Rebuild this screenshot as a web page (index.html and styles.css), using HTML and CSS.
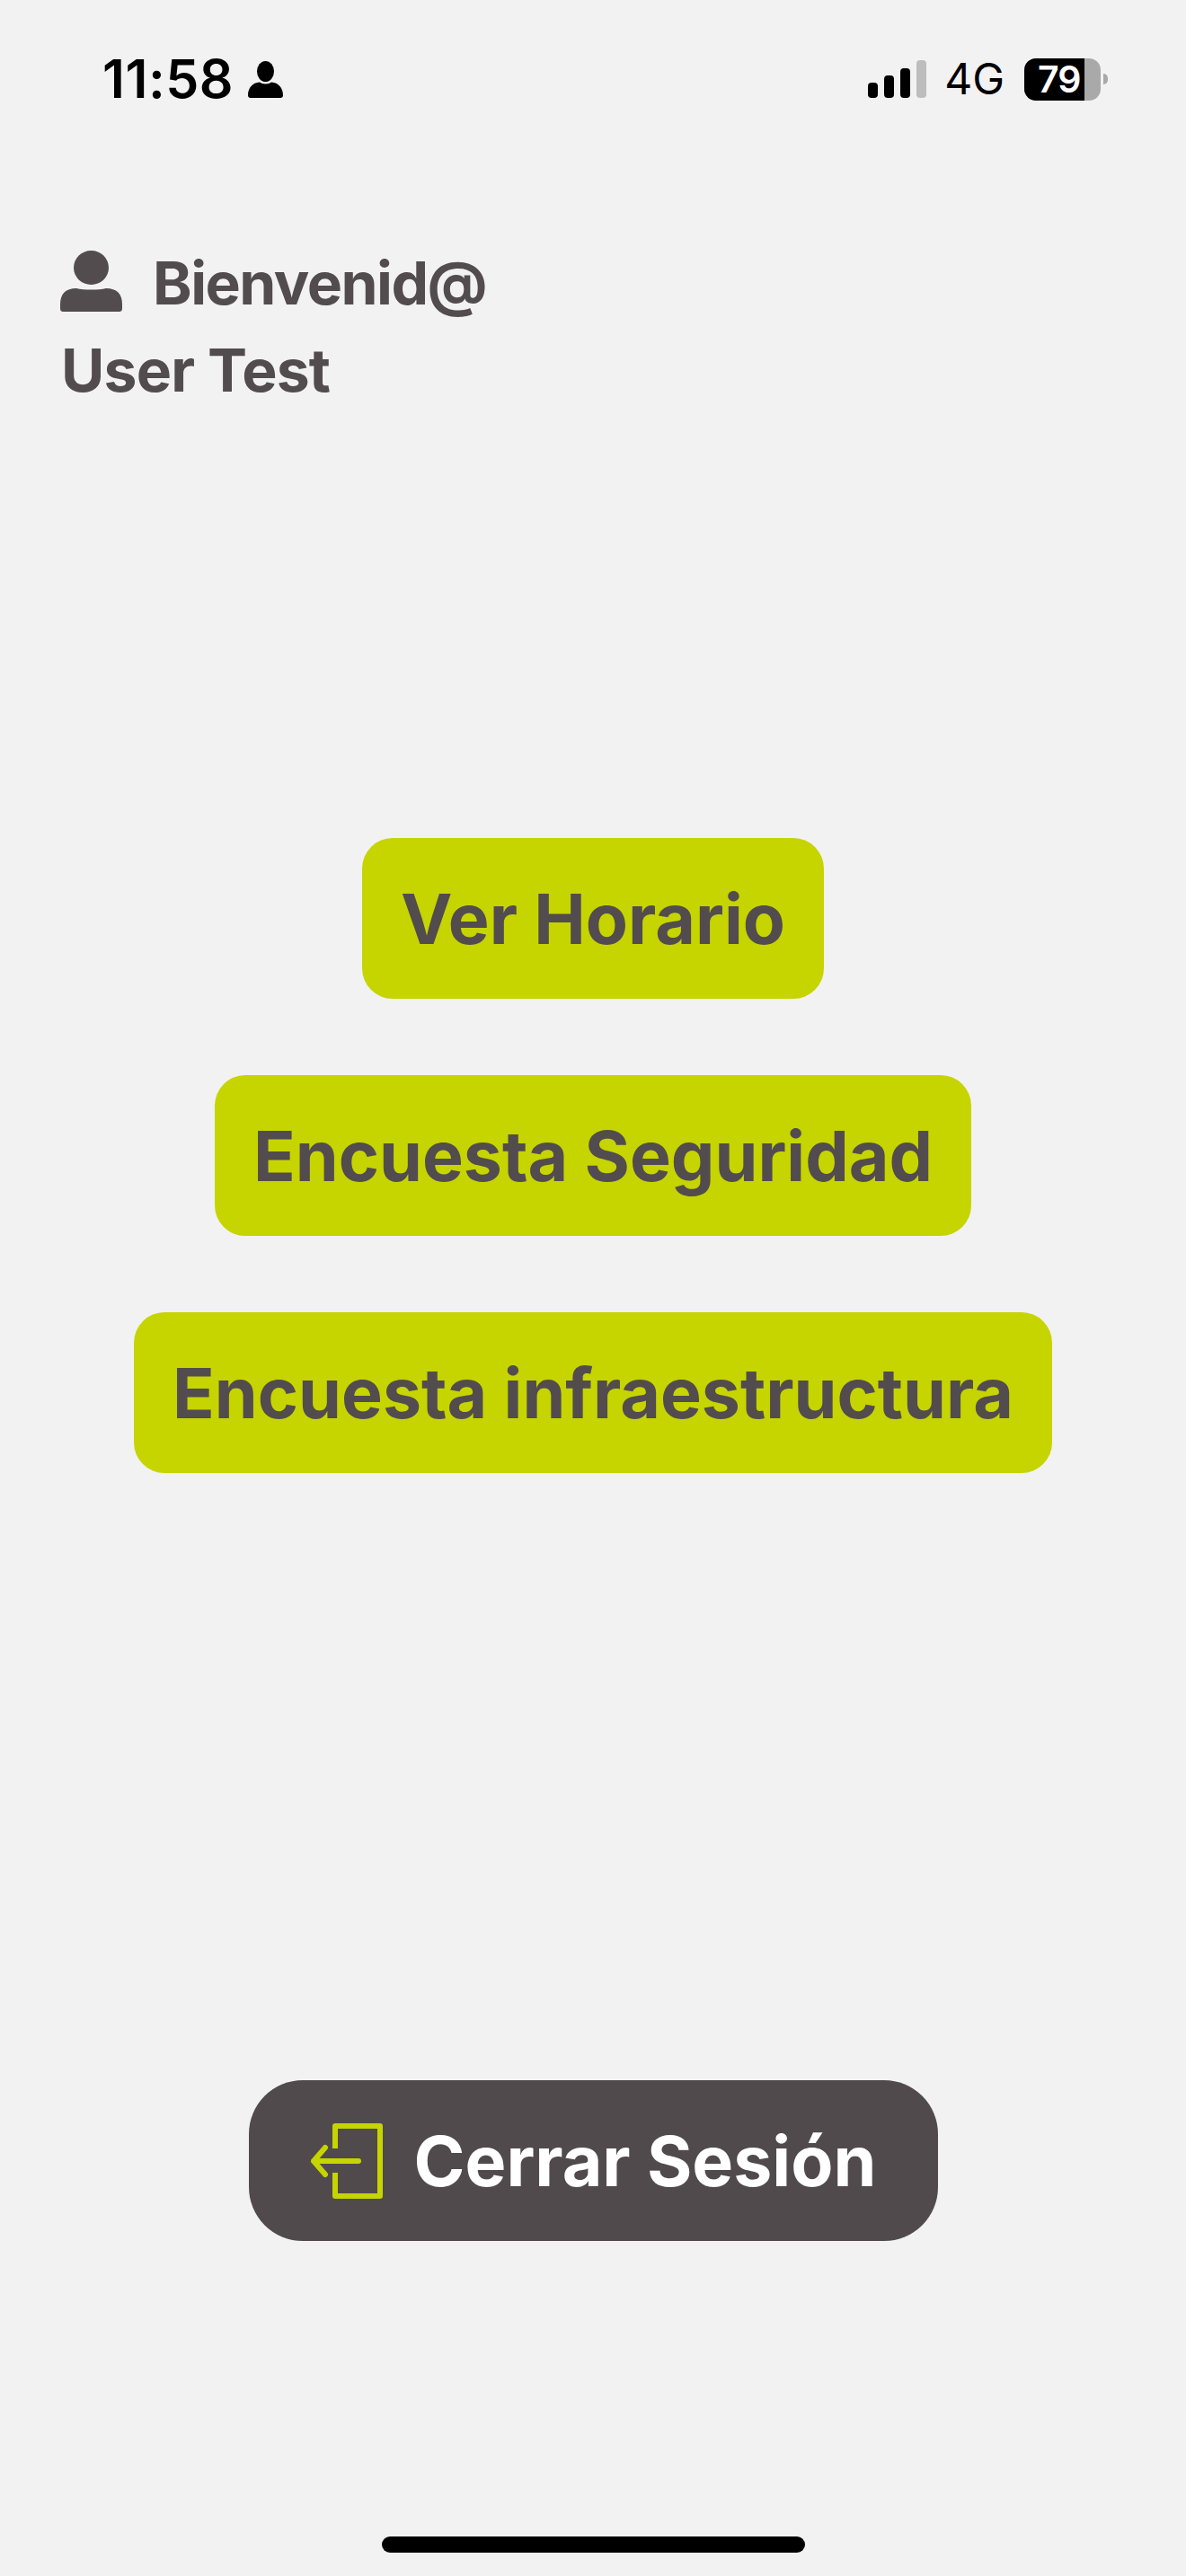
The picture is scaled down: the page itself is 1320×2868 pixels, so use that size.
FILE: index.html
```html
<!DOCTYPE html>
<html lang="es">
<head>
<meta charset="utf-8">
<title>Inicio</title>
<link rel="stylesheet" href="styles.css">
</head>
<body>
<div class="screen">
  <header class="status">
    <div class="status-left">
      <span class="time">11:58</span>
      <svg class="status-person" viewBox="0 0 39 41"><ellipse cx="19.5" cy="11.5" rx="9.5" ry="11.5"/><path d="M0 38C0 30 5 24 13 23.500C16 26 23 26 26 23.500C34 24 39 30 39 38C39 40 38 41 36 41H3C1 41 0 40 0 38Z"/></svg>
    </div>
    <div class="status-right">
      <div class="signal"><i class="bar b1"></i><i class="bar b2"></i><i class="bar b3"></i><i class="bar b4"></i></div>
      <span class="net">4G</span>
      <div class="battery"><span class="battery-level">79</span></div>
      <i class="battery-nub"></i>
    </div>
  </header>

  <section class="welcome">
    <div class="welcome-row">
      <svg class="welcome-icon" viewBox="0 0 69 68"><ellipse cx="34.500" cy="19" rx="19.500" ry="19"/><path d="M0 60C0 48 6 42 18 42C26 44 43 44 51 42C63 42 69 48 69 60V64C69 67 68 68 65 68H4C1 68 0 67 0 64Z"/></svg>
      <span class="welcome-text">Bienvenid@</span>
    </div>
    <div class="welcome-name">User Test</div>
  </section>

  <main class="actions">
    <button class="action">Ver Horario</button>
    <button class="action">Encuesta Seguridad</button>
    <button class="action">Encuesta infraestructura</button>
  </main>

  <div class="logout-wrap">
    <button class="logout">
      <svg class="logout-icon" viewBox="0 0 81 84" fill="none"><path d="M28 28V3H78V81H28V55" stroke-linejoin="round"/><path d="M54 42H4M17 27L4 42L17 57" stroke-linejoin="round" stroke-linecap="round"/></svg>
      <span>Cerrar Sesión</span>
    </button>
  </div>

  <div class="home-bar"></div>
</div>
</body>
</html>
```

FILE: styles.css
```css
* { box-sizing: border-box; }
html, body { margin: 0; padding: 0; }
body { background: #f2f2f2; font-family: Inter, "Liberation Sans", sans-serif; }

.screen {
  width: 1320px;
  height: 2868px;
  display: flex;
  flex-direction: column;
  overflow: hidden;
}

.status {
  height: 60px;
  margin-top: 58px;
  padding: 0 87px 0 114px;
  display: flex;
  justify-content: space-between;
  align-items: center;
  color: #000;
}
.status-left { display: flex; align-items: center; gap: 16px; }
.time { font-size: 59px; font-weight: 600; line-height: 60px; letter-spacing: 0.5px; }
.status-person { width: 39px; height: 41px; fill: #000; }
.status-right { display: flex; align-items: center; }
.signal { display: flex; align-items: flex-end; gap: 7px; height: 42px; }
.bar { display: block; width: 11px; border-radius: 4px; background: #000; }
.b1 { height: 17px; }
.b2 { height: 25px; }
.b3 { height: 33px; }
.b4 { height: 42px; background: #bdbdbd; }
.net { margin-left: 20px; font-size: 48px; font-weight: 400; line-height: 60px; }
.battery {
  margin-left: 22px;
  width: 85px;
  height: 47px;
  border-radius: 13px;
  background: #a9a9a9;
}
.battery-level {
  display: block;
  width: 67px;
  height: 47px;
  padding-left: 15px;
  border-radius: 13px 0 0 13px;
  background: #000;
  color: #fff;
  font-size: 41px;
  font-weight: 600;
  line-height: 47px;
  letter-spacing: -1px;
  white-space: nowrap;
}
.battery-nub { display: block; width: 5px; height: 12px; margin-left: 3px; border-radius: 0 5px 5px 0; background: #a9a9a9; }

.welcome { margin-top: 163px; padding-left: 67px; color: #524c4e; }
.welcome-row { display: flex; align-items: center; gap: 34px; height: 68px; }
.welcome-icon { width: 69px; height: 68px; fill: #524c4e; margin-top: -4px; }
.welcome-text { font-size: 66px; font-weight: 700; line-height: 68px; letter-spacing: -1.5px; }
.welcome-name { margin: 29px 0 0 1px; font-size: 66px; font-weight: 700; line-height: 68px; letter-spacing: -0.8px; }

.actions {
  margin-top: 487px;
  display: flex;
  flex-direction: column;
  align-items: center;
  gap: 85px;
}
.action {
  height: 179px;
  padding: 0 43px;
  border: 0;
  border-radius: 34px;
  background: #c6d400;
  color: #524c4e;
  font-family: inherit;
  font-size: 77px;
  font-weight: 700;
}

.logout-wrap { margin-top: 676px; display: flex; justify-content: center; }
.logout {
  width: 767px;
  height: 179px;
  display: flex;
  align-items: center;
  justify-content: center;
  gap: 35px;
  padding: 0;
  border: 0;
  border-radius: 60px;
  background: #504a4d;
  color: #fff;
  font-family: inherit;
  font-size: 77px;
  font-weight: 700;
}
.logout-icon { width: 81px; height: 84px; stroke: #c6d400; stroke-width: 6; flex: none; }

.home-bar {
  margin: 329px auto 0;
  width: 471px;
  height: 18px;
  border-radius: 9px;
  background: #000;
}
```
